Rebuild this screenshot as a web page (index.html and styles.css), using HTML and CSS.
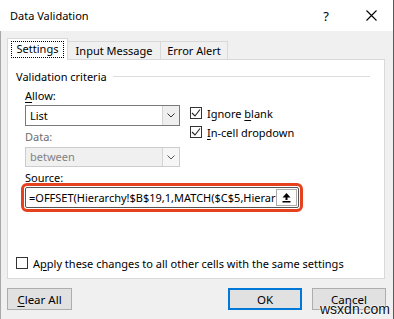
FILE: index.html
```html
<!DOCTYPE html>
<html lang="en">

<head>
    <meta charset="UTF-8">
    <meta name="viewport" content="width=device-width, initial-scale=1.0">
    <title>Data Validation</title>
    <link rel="stylesheet" href="styles.css">
</head>

<body>
    <div class="dialog">
        <div class="titlebar">
            <span class="title">Data Validation</span>
            <span class="help">?</span>
            <svg class="close" width="11" height="11" viewBox="0 0 11 11">
                <path d="M0.5 0.5 L10.5 10.5 M10.5 0.5 L0.5 10.5" stroke="#000" stroke-width="1.1" fill="none" />
            </svg>
        </div>

        <div class="content">
            <div class="tabs">
                <div class="tab active"><span class="focus">Settings</span></div>
                <div class="tab tab-input">Input Message</div>
                <div class="tab tab-error">Error Alert</div>
            </div>

            <div class="panel">
                <div class="legend">
                    <span>Validation criteria</span>
                    <span class="rule"></span>
                </div>

                <div class="criteria">
                    <div class="fields">
                        <div class="label"><u>A</u>llow:</div>
                        <div class="combo">
                            <span class="value">List</span>
                            <span class="arrow">
                                <svg width="8" height="5" viewBox="0 0 8 5">
                                    <path d="M0.5 0.5 L4 4 L7.5 0.5" stroke="#333" fill="none" />
                                </svg>
                            </span>
                        </div>
                        <div class="label label-disabled">Data:</div>
                        <div class="combo combo-disabled">
                            <span class="value">between</span>
                            <span class="arrow">
                                <svg width="8" height="5" viewBox="0 0 8 5">
                                    <path d="M0.5 0.5 L4 4 L7.5 0.5" stroke="#555" fill="none" />
                                </svg>
                            </span>
                        </div>
                    </div>

                    <div class="options">
                        <div class="check">
                            <span class="box">
                                <svg width="10" height="10" viewBox="0 0 10 10">
                                    <path d="M1 5 L4 8 L9 1.5" stroke="#222" stroke-width="1.1" fill="none" />
                                </svg>
                            </span>
                            <span>Ignore <u>b</u>lank</span>
                        </div>
                        <div class="check">
                            <span class="box">
                                <svg width="10" height="10" viewBox="0 0 10 10">
                                    <path d="M1 5 L4 8 L9 1.5" stroke="#222" stroke-width="1.1" fill="none" />
                                </svg>
                            </span>
                            <span><u>I</u>n-cell dropdown</span>
                        </div>
                    </div>
                </div>

                <div class="label label-source"><u>S</u>ource:</div>
                <div class="source">
                    <span class="formula">=OFFSET(Hierarchy!$B$19,1,MATCH($C$5,Hierar</span>
                    <span class="collapse">
                        <svg width="9" height="10" viewBox="0 0 9 10">
                            <path d="M4.5 0 L8.5 4.5 L5.5 4.5 L5.5 7 L3.5 7 L3.5 4.5 L0.5 4.5 Z" fill="#000" />
                            <rect x="0.5" y="8" width="8" height="1.5" fill="#000" />
                        </svg>
                    </span>
                </div>

                <div class="check apply">
                    <span class="box"></span>
                    <span>A<u>p</u>ply these changes to all other cells with the same settings</span>
                </div>
            </div>

            <div class="footer">
                <button class="btn btn-clear"><u>C</u>lear All</button>
                <span class="spacer"></span>
                <button class="btn btn-ok">OK</button>
                <button class="btn">Cancel</button>
            </div>
        </div>

        <span class="watermark">wsxdn.com</span>
    </div>
</body>

</html>
```

FILE: styles.css
```css
body {
    margin: 0;
    font-family: "Noto Sans", "Open Sans", sans-serif;
    font-size: 11px;
    color: #000;
    background-color: #f0f0f0;
}

u {
    text-underline-offset: 2px;
}

.dialog {
    position: relative;
    width: 394px;
    height: 319px;
    background-color: #f0f0f0;
    box-shadow: inset 1px 0 #a8a8a8, inset -1px 0 #5a5a5a;
    overflow: hidden;
}

.titlebar {
    height: 31px;
    display: flex;
    align-items: center;
    background-color: #fff;
    padding-left: 10px;
    box-shadow: inset -1px 0 #5a5a5a;
}

.title {
    flex: 1;
    font-size: 11px;
}

.help {
    font-size: 13px;
    margin-right: 37px;
}

.close {
    margin-right: 17px;
}

.content {
    padding: 7px 8px 0 7px;
}

/* tabs */
.tabs {
    display: flex;
    align-items: flex-end;
    height: 21px;
}

.tab {
    height: 18px;
    box-sizing: border-box;
    border: 1px solid #d9d9d9;
    border-bottom: none;
    border-left: none;
    display: flex;
    align-items: center;
    justify-content: center;
    line-height: 16px;
}

.tab.active {
    position: relative;
    z-index: 1;
    width: 61px;
    height: 22px;
    margin-bottom: -1px;
    border-left: 1px solid #d9d9d9;
    background-color: #fff;
}

.focus {
    border: 1px dotted #000;
    padding: 0 5px 1px;
    line-height: 14px;
}

.tab-input {
    width: 93px;
}

.tab-error {
    width: 67px;
}

/* panel */
.panel {
    height: 220px;
    margin-right: 1px;
    box-sizing: border-box;
    border: 1px solid #d9d9d9;
    background-color: #fff;
}

.legend {
    display: flex;
    align-items: center;
    height: 16px;
    margin-top: 8px;
    padding-left: 8px;
}

.rule {
    flex: 1;
    height: 1px;
    margin: 0 14px 0 6px;
    background-color: #dcdcdc;
}

.criteria {
    display: flex;
    padding-left: 17px;
    margin-top: 4px;
}

.fields {
    width: 155px;
}

.label {
    height: 16px;
    line-height: 16px;
}

.label-disabled {
    margin-top: 3px;
    color: #6d6d6d;
}

.combo {
    display: flex;
    height: 21px;
    margin-top: 1px;
    box-sizing: border-box;
    border: 1px solid #7a7a7a;
    background-color: #fff;
}

.combo .value {
    flex: 1;
    padding-left: 4px;
    line-height: 19px;
}

.arrow {
    width: 16px;
    display: flex;
    align-items: center;
    justify-content: center;
    border-left: 1px solid #d4d4d4;
    background-color: #efefef;
}

.combo-disabled {
    height: 20px;
    margin-top: 2px;
    border-color: #cccccc;
    background-color: #f0f0f0;
    color: #838383;
}

.combo-disabled .value {
    line-height: 18px;
}

.combo-disabled .arrow {
    background-color: #f6f6f6;
}

.options {
    margin-left: 10px;
    margin-top: 17px;
    display: flex;
    flex-direction: column;
    gap: 3px;
}

.check {
    display: flex;
    align-items: center;
    height: 16px;
}

.box {
    width: 12px;
    height: 12px;
    box-sizing: border-box;
    border: 1px solid #333;
    background-color: #fff;
    margin-right: 5px;
    display: flex;
    align-items: center;
    justify-content: center;
}

.label-source {
    margin: 3px 0 0 17px;
}

.source {
    display: flex;
    align-items: center;
    height: 21px;
    margin: 1px 0 0 17px;
    width: 274px;
    box-sizing: border-box;
    border: 1px solid #555;
    border-radius: 2px;
    outline: 3px solid #e5411f;
    outline-offset: 1px;
    background-color: #fff;
}

.formula {
    flex: 1;
    padding-left: 3px;
    white-space: nowrap;
    overflow: hidden;
}

.collapse {
    width: 21px;
    height: 17px;
    margin-right: 1px;
    box-sizing: border-box;
    border: 1px solid #adadad;
    background-color: #fdfdfd;
    display: flex;
    align-items: center;
    justify-content: center;
}

.apply {
    margin: 47px 0 0 8px;
}

/* buttons */
.footer {
    display: flex;
    gap: 10px;
    margin-top: 9px;
}

.spacer {
    flex: 1;
}

.btn {
    width: 74px;
    height: 22px;
    box-sizing: border-box;
    border: 1px solid #adadad;
    background-color: #e1e1e1;
    font-family: inherit;
    font-size: 11.5px;
    color: #000;
    padding: 0;
}

.btn-clear {
    width: 65px;
}

.btn-ok {
    border: 2px solid #0078d7;
}

.watermark {
    position: absolute;
    left: 320px;
    top: 301px;
    font-family: "Liberation Sans", Arial, sans-serif;
    font-size: 14px;
    color: #111;
    text-shadow: 0 0 2px #fff, 0 0 2px #fff;
}
```
